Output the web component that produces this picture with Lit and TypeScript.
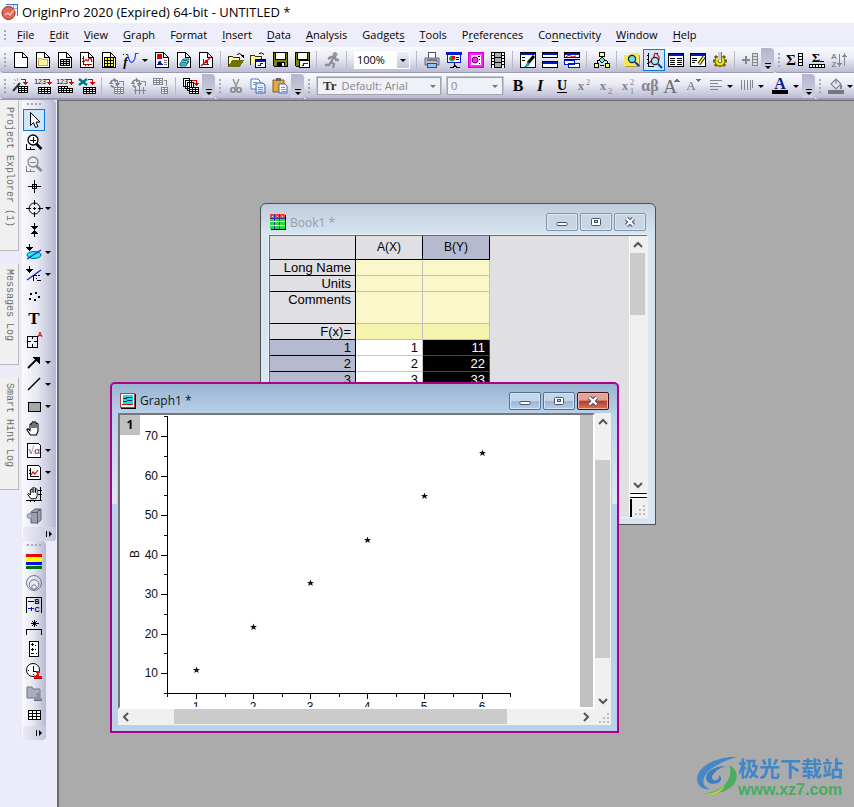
import { LitElement, html, svg, css, nothing } from "lit";
import type { SVGTemplateResult } from "lit";
import { customElement, property } from "lit/decorators.js";
import { classMap } from "lit/directives/class-map.js";
import { styleMap } from "lit/directives/style-map.js";

/* ---------- icon building blocks, drawn on a 16 by 16 grid ---------- */

const G = "#85858f";

const line = (d: string, c = "#000", w = 1, fill = "none") =>
  svg`<path d=${d} stroke=${c} stroke-width=${w} fill=${fill}></path>`;
const fill = (d: string, c = "#000") => svg`<path d=${d} fill=${c}></path>`;
const smooth = (d: string, c = "#000", w = 1, f = "none") =>
  svg`<path shape-rendering="auto" d=${d} stroke=${c} stroke-width=${w} fill=${f}></path>`;
const disc = (x: number, y: number, r: number, f = "none", c = "#000", w = 1) =>
  svg`<circle shape-rendering="auto" cx=${x} cy=${y} r=${r} fill=${f} stroke=${c} stroke-width=${w}></circle>`;
const word = (t: string, x: number, y: number, size: number, c = "#000", family = "Liberation Serif", weight = "bold", style = "normal") =>
  svg`<text x=${x} y=${y} font-size=${size} fill=${c} font-family=${family} font-weight=${weight} font-style=${style} text-anchor="middle">${t}</text>`;

const grid = (x: number, y: number, cols: number, rows: number, cw: number, rh: number, c = "#000", f = "#fff") => {
  const w = cols * cw, h = rows * rh;
  let d = `M${x + 0.5} ${y + 0.5}h${w}v${h}h${-w}z`;
  for (let i = 1; i < cols; i++) d += `M${x + 0.5 + i * cw} ${y + 0.5}v${h}`;
  for (let i = 1; i < rows; i++) d += `M${x + 0.5} ${y + 0.5 + i * rh}h${w}`;
  return line(d, c, 1, f);
};

const page = (f = "#fff") => line("M1.5 .5h8l5 5v10h-13zM9.5 .5v5h5", "#000", 1, f);
const hook = (x: number, y: number, c = "#e00000") =>
  svg`${line(`M${x} ${y + 0.5}h4.5v4`, c)}${fill(`M${x + 2} ${y + 3}h5l-2.500 3z`, c)}`;
const lens = (x: number, y: number, f = "#5fe0f0", c = "#222", h = "#1030c0") =>
  svg`${smooth(`M${x + 3} ${y + 3}l4 4`, h, 2)}${disc(x, y, 3.6, f, c, 1.2)}`;
const handShape = "M4.500 15l-3.500-5q0-2 2-.5l1 1V4.500q1-1.500 2 0V2.500q1-1.500 2 0v0q1-1.500 2 0V4q1-1.500 2 0v7l-1.500 4zM6 4v4M8 3v5M10 3v5";
const hand = smooth(handShape, "#000", 1.1, "#fff");
const stamp = (x: number, y: number, f = "#e81010", c = "#900") =>
  svg`${fill(`M${x + 2} ${y}h4v2h-1v3h3v3h-8v-3h3v-3h-1z`, f)}${line(`M${x} ${y + 7.5}h8`, c)}`;
const disk = (t: SVGTemplateResult | typeof nothing) =>
  svg`${line("M1.500 .5h14v14h-13l-1-1z", "#000", 1, "#7f7f10")}${fill("M4 1h9v6h-9z", "#fff")}${line("M3.500 1v6.500h10v-6.500")}${fill("M5 10h8v5h-8z")}${fill("M10 11h2v3h-2z", "#fff")}${t}`;
const win = (x: number, y: number, w: number, h: number, f = "#fff") =>
  svg`${line(`M${x + 0.5} ${y + 0.5}h${w}v${h}h${-w}z`, "#000", 1, f)}${fill(`M${x + 1} ${y + 1}h${w - 1}v2h${1 - w}z`, "#0018c0")}`;
const cycle = (c: string) => svg`${smooth("M1.500 6q0-4 4-4M8 3q2 3-1 4.500M5 9q-2.500 0-3-2", c, 1.500)}${fill("M5 0l4 2.500-4 2zM6 5l5 0-2.500 4zM0 6h4l-2-3z", c)}`;
const stripes = (c: string, y = 2) => line(`M2 ${y}.500h12M2 ${y + 3}.500h8M2 ${y + 6}.500h12M2 ${y + 9}.500h8`, c);

const icons: Record<string, SVGTemplateResult> = {
  blank: page(),
  folderPage: svg`${page()}${line("M3.500 13.500v-7h3l1 1h5v6z", "#c0b040", 1, "#fff59a")}`,
  bookPage: svg`${page()}${grid(3, 7, 3, 3, 3, 2, "#000", "#ddd")}`,
  graphPage: svg`${page()}${line("M4.500 4v8.500h8M3 6.500h1M3 9.500h1M6.500 13v1M9.500 13v1", "#a00000")}${smooth("M5 10l2-2.500 2 1.500q1-4 3.500-2v3", "#e00000", 1.200)}`,
  matrixPage: svg`${page()}${grid(3, 5, 3, 3, 3, 3, "#000", "#ffff00")}`,
  fx: svg`${line("M0 2.500h1M3 2.500h1M12 2.500h1")}${smooth("M4.500 2q2 10 5 8t3-8.500l3 0", "#2040ff", 1.200)}${word("f", 2.5, 14, 13, "#000", "Liberation Serif", "bold", "italic")}`,
  layoutPage: svg`${page()}${fill("M3 2h5v5h-5z", "#e00000")}${fill("M3 13l3-5 3 5z", "#0010c0")}${line("M10 8.500h3M10 10.500h3M10 12.500h3", "#777")}`,
  notePage: svg`${page()}${smooth("M4 12l3-5h6l-3 5zM4 12v2h6l3-5", "#006a78", 1, "#6ff0f8")}${line("M7 8.500h4M6 10.500h4", "#006a78")}`,
  linkPage: svg`${page()}${smooth("M3 14l10-9", "#e00000", 1.300)}${line("M5.500 7v5h5M9.500 8v5", "#333")}${fill("M7 8h3v3h-3z", "#e00000")}`,
  open: svg`${line("M.5 14.500v-10h4l1 1h6v3", "#303008", 1, "#ffffb0")}${fill("M0 15l4-7h12l-4 7z", "#70700c")}${smooth("M9 2.500q3-2.500 5 1", "#000", 1)}${fill("M12 3h4v3z")}`,
  openTpl: svg`${line("M.5 12.500v-9h4l1 1h6v3", "#303008", 1, "#fff59a")}${smooth("M9 1.500q3-1.500 5 1", "#000", 1)}${win(5, 7, 10, 8)}${line("M8 13.500h2v-2h3", "#0018c0")}`,
  save: disk(nothing),
  saveTpl: disk(svg`${fill("M5 8h11v8h-11z", "#fff")}${line("M5.500 8.500h10v7h-10z")}${line("M7.500 13.500h2v-2h4", "#0018c0")}`),
  run: svg`${disc(11, 2.5, 2, "#999", "#999")}${smooth("M10 5l-3 5 3 2-1 4M7 10l-2 3H1M4 7l3-2h4l1 3h3", "#8d8d93", 2.3)}`,
  print: svg`${fill("M4 1h8v5h-8z", "#fff")}${line("M4.500 6v-5.500h7v5.500", "#556")}${smooth("M1 6h14v7H1z", "#667", 1, "#b8bcc4")}${fill("M3 7h10v2h-10z", "#778")}${line("M3.500 11.500h9v4h-9z", "#445", 1, "#8fc4f4")}${fill("M12 9h2v1h-2z", "#30b030")}`,
  slides: svg`${fill("M0 0h16v3h-16z", "#0018d8")}${line("M1.500 3v7.500h13v-7.500", "#0018d8", 1, "#fff")}${disc(6, 6.5, 2.5, "#18a030", "#18a030")}${fill("M6 4h3v3h-3z", "#e00000")}${line("M10 5.500h3M10 7.500h3M8.500 11v3M4 15.500h3l2-2 2 2h3", "#000")}`,
  pink: svg`${line("M.5 .5h15v15h-15z", "#d000d0", 1, "#ff20ff")}${fill("M3 3h10v10h-10z", "#fff")}${disc(7, 8, 3, "#ff20ff", "#500050")}${line("M10 4.500h2M11 7.500h1M11 11.500h1")}`,
  film: svg`${fill("M1 0h14v16h-14z")}${fill("M5 1h6v4h-6zM5 6h6v4h-6zM5 11h6v4h-6z", "#aaa")}${line("M3 1v15M13 1v15", "#fff", 2)}${line("M1 3h4M11 3h4M1 6h4M11 6h4M1 9h4M11 9h4M1 12h4M11 12h4", "#000", 1)}`,
  editWin: svg`${win(0, 0, 15, 15)}${line("M2 5.500h3M2 8.500h3", "#000")}${smooth("M14 4l-6 7", "#000", 3)}${smooth("M8 10l-3 5 4-2z", "#008890", 1, "#20d0d0")}`,
  twoWin: svg`${win(0, 0, 15, 5)}${win(0, 9, 15, 6)}`,
  threeWin: svg`${win(0, 0, 15, 5)}${smooth("M2 5l3-2 3 2 4-1", "#e00000")}${line("M.5 8.500h10v4h-10zM4.500 11.500h11v4h-11z", "#0018c0", 1, "#fff")}${line("M0 7.500h16")}`,
  tree: svg`${line("M8 4v4M3 12v-3l5-2 5 2v3")}${line("M5.500 .5h5v4h-5zM.5 11.500h4v4h-4zM11.500 11.500h4v4h-4zM6 13.500h4", "#000", 1, "#ffff70")}${smooth("M8 5l3 3-3 3-3-3z", "#000", 1, "#5fe8f0")}`,
  findFolder: svg`${fill("M0 3h5l1-2h9v13h-15z", "#f4e860")}${line("M.5 14.500h14.500v-12", "#b0a020")}${lens(8, 7)}`,
  findGraph: svg`${line("M2.500 1v13.500h5M1 3.500h1M1 7.500h1M1 11.500h1M11.500 2v-1")}${smooth("M3 11l2-2q2 1 3-5t5 1v3", "#e00000", 1.200)}${lens(9, 9, "#a8e8f4")}`,
  tableWin: svg`${win(0, 1, 15, 13)}${line("M2 6.500h5M9 6.500h5M2 8.500h5M9 8.500h5M2 10.500h5M9 10.500h5M2 12.500h5M9 12.500h5")}`,
  noteWin: svg`${win(0, 1, 15, 13)}${line("M2 6.500h5M2 8.500h5M2 10.500h3")}${smooth("M14 5l-5 7", "#000", 3.5)}${smooth("M14 5l-5 7", "#f8f020", 1.8)}`,
  gear: svg`${smooth("M8 3v12M1 9h14M3 4l10 10M13 4l-10 10", "#6b6400", 3)}${disc(8, 9, 5, "#e8e020", "#6b6400")}${disc(8, 9, 1.8, "#fff", "#6b6400")}${fill("M6 0h3v8h-3z", "#ccc")}${line("M9.500 0v8", "#777")}`,
  addCol: svg`${line("M0 8h8M4 4v8", G, 2)}${grid(10, 1, 1, 4, 5, 3, G, "#ddd")}`,
  sumCol: svg`${word("Σ", 4, 13, 15)}${grid(11, 1, 1, 4, 4, 3)}`,
  sumRow: svg`${word("Σ", 7, 10, 13)}${line("M11 9.500h4")}${grid(0, 12, 5, 1, 3, 3)}`,
  sort: svg`${word("A", 3, 7, 8, G, "Liberation Sans")}${word("Z", 3, 15, 8, G, "Liberation Sans")}${line("M8.500 2v11M13.500 3v11", G)}${fill("M6 11h5l-2.500 4zM11 5h5l-2.500-4z", G)}`,

  wizard: svg`${grid(5, 8, 3, 3, 3, 2)}${hook(8, 1)}${smooth("M0 13l7-8", "#333", 2)}${line("M4.500 0v3M1 1l2 2M0 5.500h2", "#e0b000")}`,
  import1: svg`${word("123", 5, 6, 7, "#000", "Liberation Sans", "normal")}${hook(10, 1)}${grid(3, 9, 4, 3, 3, 2)}`,
  importN: svg`${word("123", 5, 6, 7, "#000", "Liberation Sans", "normal")}${hook(10, 1)}${grid(1, 8, 3, 3, 3, 2)}${grid(6, 10, 3, 2, 3, 2)}`,
  excel: svg`${smooth("M0 1l8 6M8 1l-8 6", "#007878", 2.4)}${hook(9, 1)}${grid(4, 9, 4, 3, 3, 2)}`,
  reimp: svg`${cycle(G)}${line("M10 3.500h4v4", G)}${grid(5, 9, 3, 3, 3, 2, G)}`,
  reimp2: svg`${cycle(G)}${line("M10 3.500h4v4M4.500 9v7M8.500 9v7M12.500 9v7M3 12.500h12", G)}`,
  move: svg`${grid(0, 0, 3, 3, 3, 2, G)}${line("M11 2.500h2.500v5", G)}${grid(8, 9, 2, 3, 3, 2, G)}`,
  clone: svg`${line("M.5 .5h6v8h-6zM2.500 2.500h6v8h-6zM4.500 4.500h6v8h-6z", "#000", 1, "#fff")}${grid(6, 9, 3, 3, 3, 2)}${hook(9, 2)}`,
  cut: svg`${smooth("M5 1l4 9M11 1l-4 9", "#999", 1.6)}${disc(5, 12, 2.2, "none", "#888", 1.6)}${disc(11, 12, 2.2, "none", "#888", 1.6)}`,
  copy: svg`${smooth("M1 1h7l2 2v8H1z", "#4a78c0", 1, "#fff")}${smooth("M6 5h7l2 2v8H6z", "#3a68b0", 1, "#dfeaff")}${line("M3 4.500h4M3 6.500h3M8 9.500h5M8 11.500h5M8 13.500h5", "#6b98dc")}`,
  paste: svg`${smooth("M1 2h11v12H1z", "#8a5a10", 1, "#e8a838")}${fill("M4 0h5v3h-5z", "#666")}${smooth("M7 6h6l2 2v7H7z", "#3a68b0", 1, "#fff")}${line("M9 9.500h4M9 11.500h5M9 13.500h5", "#6b98dc")}`,
  bold: word("B", 8, 13, 16),
  italic: word("I", 8, 13, 16, "#000", "Liberation Serif", "bold", "italic"),
  under: svg`${word("U", 8, 12, 14)}${line("M3 14.500h10")}`,
  sup: svg`${word("x", 5, 12, 13, G)}${word("2", 12, 7, 9, G, "Liberation Serif", "normal")}`,
  sub: svg`${word("x", 5, 12, 13, G)}${word("2", 12, 16, 9, G, "Liberation Serif", "normal")}`,
  supsub: svg`${word("x", 5, 12, 13, G)}${word("2", 12, 7, 9, G, "Liberation Serif", "normal")}${word("1", 12, 16, 9, G, "Liberation Serif", "normal")}`,
  greek: word("αβ", 8, 13, 16, G),
  grow: svg`${word("A", 6, 15, 19, "#707078", "Liberation Serif", "normal")}${fill("M10 4h6l-3-4z", "#707078")}`,
  shrink: svg`${word("A", 5, 12, 13, "#707078", "Liberation Serif", "normal")}${fill("M10 1h5l-2.500 3z", "#707078")}`,
  align: stripes(G),
  bars: line("M2.500 2v10M5.500 2v10M8.500 2v10M11.500 2v10M13.500 2v8", G),
  ink: svg`${word("A", 8, 11, 16, "#101880")}${fill("M0 12h16v4h-16z")}`,
  paint: svg`${smooth("M3 6l5-5 5 5-5 5zM8 1v5", G, 1.2, "#e8e8f0")}${fill("M12 6q3 2 2 5h-2z", G)}${fill("M0 12h16v4h-16z", "#777")}`,

  arrow: smooth("M4.500 .5v13l3-3 2 5 2.500-1-2-4.500h4z", "#000", 1, "#fff"),
  zoomIn: svg`${disc(7, 6, 5, "#fff", "#000", 1.3)}${line("M4 6.500h6M7.500 3v6", "#000")}${smooth("M10.500 10l5 5", "#000", 2.5)}${line("M.5 10v5h8M4.500 13v2")}`,
  zoomOut: svg`${disc(7, 6, 5, "#eee", G, 1.3)}${line("M4 6.500h6", G)}${smooth("M10.500 10l5 5", G, 2.5)}${line("M.5 10v5h8M4.500 13v2", G)}`,
  reader: line("M8.500 2v13M2 8.500h13M6.500 6.500h4v4h-4z"),
  cross: svg`${disc(8.5, 8.5, 5.5, "none", "#000")}${line("M8.500 0v5M8.500 12v5M0 8.500h5M12 8.500h5M7 8.500h3M8.500 7v3")}`,
  marker: svg`${line("M8.500 1v4M8.500 11v4")}${fill("M5 4h7l-3.500 4zM5 12h7l-3.500-4z")}`,
  region: svg`${smooth("M1 11a7 3.500 0 1 0 14 0a7 3.500 0 1 0-14 0", "#006080", 1, "#20f0f0")}${smooth("M1 15l14-9", "#1020e0", 1.200)}${line("M3.500 0v4")}${fill("M0 3h7l-3.500 4z")}`,
  mask: svg`${smooth("M1 14l14-10", "#1020e0", 1.200)}${line("M3.500 0v4M7.500 15v-6h3M12 9.500h2M11 14.500h4M10.500 12v1")}${fill("M0 3h7l-3.500 4z")}`,
  dots: fill("M4 5h2v2h-2zM9 4h2v2h-2zM12 8h2v2h-2zM3 10h2v2h-2zM8 11h2v2h-2z"),
  text: word("T", 8, 14, 17, "#000", "Liberation Serif", "bold"),
  annot: svg`${line("M1.500 4.500h10v11h-10zM1 9.500h4M8 9.500h4M6.500 4v3M6.500 12v3")}${word("A", 14, 5, 7, "#e00000", "Liberation Sans")}`,
  arrowLine: svg`${smooth("M2 14l9-9", "#000", 1.8)}${fill("M6 3h8v8z")}`,
  lineTool: smooth("M2 14l12-12", "#000", 1.4),
  rect: line("M2.500 4.500h12v9h-12z", "#000", 1, "#a8a8a8"),
  hand,
  rootPage: svg`${line("M1.500 1.500h11l2 2v12h-13z", "#000", 1, "#fff")}${word("√α", 8, 12, 11, "#700090", "Liberation Serif", "normal")}`,
  plotPage: svg`${line("M1.500 1.500h11l2 2v12h-13z", "#000", 1, "#fff")}${line("M4.500 4v8.500h8M3 6.500h1M3 9.500h1")}${smooth("M5 11l2-3 2 2 3-4", "#e00000", 1.2)}`,
  handAxis: svg`${line("M14.500 1v14M12 14.500h4M0 14.500h12M12 4.500h4M12 8.500h4M4.500 14v2M8.500 14v2")}<g transform="translate(1 0) scale(.85)">${hand}</g>`,
  cube: svg`${smooth("M5 4l4-3h6v11l-4 3H5z", "#5a6070", 1, "#9ba2ae")}${line("M5.500 4.500h6v11M11 4l4-3", "#5a6070")}${disc(3.5, 8, 2.5, "#b8bec8", "#8a90a0")}`,
  colors: svg`${fill("M0 1h16v3h-16z", "#f00000")}${fill("M0 5h16v3h-16z", "#ffff00")}${fill("M0 9h16v3h-16z", "#0010f0")}${fill("M0 13h16v3h-16z", "#007010")}`,
  rings: svg`${disc(8, 8, 7.5, "none", "#70788c")}${disc(8, 9.5, 4.8, "#e6e8f2", "#70788c")}${disc(8, 12, 2.2, "#fff", "#70788c")}`,
  legend: svg`${line("M.5 16v-15.500h15v15.500M2 4.500h6")}${line("M2 11.500h6M5 9.500v4", "#0010f0")}${word("B", 11, 7, 7, "#000", "Liberation Sans")}${word("C", 11, 15, 7, "#000", "Liberation Sans")}`,
  scale: svg`${line("M8.500 1v7M5 4.500h8M6 2l5 5M11 2l-5 5")}${line("M.5 16v-5.500h15v5.500")}`,
  scaleBar: svg`${line("M3.500 .5h9v15h-9z", "#000", 1, "#fff")}${line("M5 3.500h3M5 8.500h3M5 12.500h3M6.500 2v3M6.500 7v3M9.500 4v1M9.500 8v1M10.500 12v1")}`,
  clock: svg`${disc(7, 7, 6.5, "#fff", "#000")}${line("M7.500 3v5h3M2 7.500h1M7.500 12v-1")}${stamp(8, 8)}`,
  folderStamp: svg`${smooth("M1 13v-11h5l1 2h7v9z", "#70788c", 1, "#a8aebc")}${stamp(8, 8, "#8a90a0", "#606878")}`,
  table: grid(2, 3, 3, 3, 4, 3),

  app: svg`${line("M4 .5h11.500v11", "#3a78d0", 1, "#e4f0ff")}${line("M8 4.500h7M11.500 1v10", "#8ab4ec")}${smooth("M0 9a6.500 6.500 0 1 0 13 0a6.500 6.500 0 1 0-13 0", "#a02818", 1, "#e06a58")}${smooth("M3 11l3-2 2 2 4-5", "#f4c4b8", 1.4)}`,
  book: svg`${fill("M1 1h15v15h-15z")}${fill("M0 0h15v15h-15z", "#30d840")}${fill("M0 0h15v4h-15z", "#f04040")}${line("M0 4.500h15M4.500 0v15M9.500 0v15", "#3038b0")}${line("M0 7.500h15M0 11.500h15", "#d8ffd8")}${line("M2 2.500h1M7 2.500h1M12 2.500h1", "#fff")}`,
  graph: svg`${fill("M1 1h15v15h-15z")}${line("M.5 .5h14v14h-14z", "#a84040", 1, "#fff")}${fill("M3 2h10v9h-10z", "#18e0e0")}${line("M3 5.500h3l1-1h5M3 8.500h3l2-1h4", "#102060")}${line("M2 11.500h11", "#c01010")}`,
};

const glyph = (name: string) => html`<svg class="glyph" viewBox="0 0 16 16" aria-hidden="true">${icons[name]}</svg>`;
const iconStyles = css`
  .glyph { width: 16px; height: 16px; display: block; flex: none; overflow: visible; shape-rendering: crispEdges; }
`;

/* ---------- tool bars ---------- */

type Item =
  | { kind: "tool"; icon: string; label: string; drop?: boolean; on?: boolean; wide?: boolean }
  | { kind: "sep" }
  | { kind: "grip" }
  | { kind: "more" }
  | { kind: "combo"; label: string; value: string; size: string; off?: boolean; tt?: boolean };

const t = (icon: string, label: string, extra: object = {}): Item => ({ kind: "tool", icon, label, ...extra });
const sep: Item = { kind: "sep" };
const grip: Item = { kind: "grip" };
const more: Item = { kind: "more" };

@customElement("tool-bar")
class ToolBar extends LitElement {
  @property({ attribute: false }) items: Item[] = [];
  @property({ type: Boolean, reflect: true }) vertical = false;

  static styles = [iconStyles, css`
    :host { display: flex; align-items: center; height: 26px; overflow: hidden; background: #ebebfa; }
    :host([vertical]) { flex-direction: column; align-items: flex-start; height: auto; border-radius: 4px;
      background: linear-gradient(90deg, #fafaff, #e6e7f2 45%, #b7b8d1); box-sizing: border-box; padding-left: 1px; }
    .bar { display: flex; align-items: center; height: 26px; padding-top: 1px; flex: none;
      background: linear-gradient(#fafbff, #e9eaf4 45%, #bbbcd2); border-radius: 4px 0 0 4px; border-bottom: 1px solid #9a9ab4; box-sizing: border-box; }
    .bar:last-child { flex: 1 0 auto; }
    button { padding: 0; border: 0; background: none; font: inherit; display: flex; align-items: center; justify-content: center; flex: none; }
    .tool { width: 22px; height: 22px; box-sizing: border-box; }
    .tool.wide { width: 26px; }
    .tool.on { border: 1px solid #0a78d4; background: #cfe6fa; }
    .pair { display: flex; align-items: center; flex: none; }
    .arrow { width: 9px; height: 22px; padding-right: 3px; }
    .arrow::before, .pick::after { content: ""; border: 3px solid transparent; border-top-color: #000; border-bottom: 0; }
    .sep { width: 1px; height: 18px; margin: 0 4px 0 3px; background: #b8b8c6; flex: none; }
    .grip { width: 2px; height: 14px; margin: 0 4px; flex: none; background: repeating-linear-gradient(#a9a9b6 0 2px, transparent 2px 4px); }
    .more { width: 13px; height: 24px; flex-direction: column; justify-content: flex-end; gap: 2px; padding-bottom: 3px;
      background: linear-gradient(#b4b5cc, #cfd0df); border-radius: 0 4px 4px 0; box-sizing: border-box; }
    .more::before { content: ""; width: 6px; height: 1px; background: #000; }
    .more::after { content: ""; border: 3px solid transparent; border-top-color: #000; border-bottom: 0; }
    :host([vertical]) .grip { width: 16px; height: 2px; margin: 3px 4px 4px;
      background: repeating-linear-gradient(90deg, #a9a9b6 0 2px, transparent 2px 4px); }
    :host([vertical]) .more { width: 100%; height: 14px; flex-direction: row; align-items: center; gap: 2px; padding: 0 4px 0 0;
      background: linear-gradient(90deg, #ebebf6, #c4c5d8); border-radius: 0; }
    :host([vertical]) .more::before { width: 1px; height: 6px; }
    :host([vertical]) .more::after { border: 3px solid transparent; border-left-color: #000; border-right: 0; }
    .pick { position: relative; display: flex; align-items: center; height: 18px; box-sizing: border-box; margin: 0 3px; background: #fff;
      color: #000; font: 11px/16px "Open Sans", sans-serif; flex: none; }
    .pick.off { border: 1px solid #a2a2ae; outline: 1px solid #c3c3ce; background: #f0f1f7; color: #85858f; }
    .pick::after { position: absolute; right: 4px; top: 8px; }
    .pick:not(.off)::before { content: ""; position: absolute; right: 1px; top: 1px; bottom: 1px; width: 12px; background: linear-gradient(#eef0f8, #c4c5d8); }
    .pick.off::after { border-top-color: #777; top: 7px; }
    .tt { margin-left: 5px; font: bold 13px/16px "Liberation Serif", serif; color: #333; }
    select { appearance: none; border: 0; background: none; font: inherit; color: inherit; opacity: 1; flex: 1; min-width: 0; height: 100%; padding: 0 14px 0 3px; }
    .tt + select { padding-left: 5px; }
    .small { width: 56px; } .large { width: 124px; } .medium { width: 56px; margin: 0 4px 0 3px; }
  `];

  private draw(i: Item) {
    switch (i.kind) {
      case "sep": return html`<span class="sep"></span>`;
      case "grip": return html`<span class="grip"></span>`;
      case "more": return html`<button class="more" aria-label="More buttons"></button>`;
      case "combo": return html`<label class="pick ${i.size} ${i.off ? "off" : ""}">
        ${i.tt ? html`<span class="tt">Tr</span>` : nothing}
        <select aria-label=${i.label} ?disabled=${!!i.off}><option>${i.value}</option></select></label>`;
      case "tool": {
        const b = html`<button class=${classMap({ tool: true, on: !!i.on, wide: !!i.wide })} aria-label=${i.label}>${glyph(i.icon)}</button>`;
        return i.drop ? html`<span class="pair">${b}<button class="arrow" aria-label="${i.label} options"></button></span>` : b;
      }
    }
  }

  render() {
    if (this.vertical) return this.items.map((i) => this.draw(i));
    const groups: Item[][] = [];
    for (const i of this.items) {
      if (i.kind === "grip") groups.push([]);
      groups[groups.length - 1].push(i);
    }
    return groups.map((g) => html`<div class="bar">${g.map((i) => this.draw(i))}</div>`);
  }
}

const standardBar: Item[] = [
  grip, t("blank", "New project"), t("folderPage", "New folder"), t("bookPage", "New workbook"), t("graphPage", "New graph"),
  t("matrixPage", "New matrix"), t("fx", "New function", { drop: true }), t("layoutPage", "New layout"), t("notePage", "New notes"), t("linkPage", "Digitize"),
  sep, t("open", "Open"), t("openTpl", "Open template"), t("save", "Save"), t("saveTpl", "Save template"),
  sep, t("run", "Run"), sep, { kind: "combo", label: "Zoom", value: "100%", size: "small" },
  sep, t("print", "Print"), t("slides", "Slide show"), t("pink", "Send to slides"), t("film", "Video"),
  sep, t("editWin", "Edit"), t("twoWin", "Tile"), t("threeWin", "Cascade"),
  sep, t("tree", "Tree"), sep, t("findFolder", "Project explorer"), t("findGraph", "Object manager", { on: true }),
  t("tableWin", "Results log"), t("noteWin", "Command window"), t("gear", "Code builder"),
  sep, t("addCol", "Add column"), more,
  grip, t("sumCol", "Column statistics"), t("sumRow", "Row statistics"), t("sort", "Sort"),
];

const formatBar: Item[] = [
  grip, t("wizard", "Import wizard"), t("import1", "Import ASCII"), t("importN", "Import multiple"), t("excel", "Import Excel"),
  sep, t("reimp", "Reimport"), t("reimp2", "Reimport all"), t("move", "Transfer"), sep, t("clone", "Clone import"), more,
  grip, t("cut", "Cut"), t("copy", "Copy"), t("paste", "Paste"), more,
  grip, { kind: "combo", label: "Font", value: "Default: Arial", size: "large", off: true, tt: true },
  { kind: "combo", label: "Font size", value: "0", size: "medium", off: true },
  t("bold", "Bold"), t("italic", "Italic"), t("under", "Underline"), t("sup", "Superscript"), t("sub", "Subscript"),
  t("supsub", "Super and subscript"), t("greek", "Greek"), t("grow", "Increase font"), t("shrink", "Decrease font"),
  t("align", "Align", { drop: true }), t("bars", "Spacing", { drop: true }), t("ink", "Font color", { drop: true, wide: true }), more,
  grip, t("paint", "Fill color", { drop: true }),
];

const toolsBar: Item[] = [
  grip, t("arrow", "Pointer", { on: true }), t("zoomIn", "Zoom in"), t("zoomOut", "Zoom out"), t("reader", "Screen reader"),
  t("cross", "Data reader", { drop: true }), t("marker", "Data selector"), t("region", "Region selection", { drop: true }),
  t("mask", "Mask points", { drop: true }), t("dots", "Draw data"), t("text", "Text"), t("annot", "Annotation"),
  t("arrowLine", "Arrow", { drop: true }), t("lineTool", "Line", { drop: true }), t("rect", "Rectangle", { drop: true }),
  t("hand", "Pan"), t("rootPage", "Insert equation", { drop: true }), t("plotPage", "Insert graph", { drop: true }),
  t("handAxis", "Rescale"), t("cube", "Rotate"), more,
];

const graphBar: Item[] = [
  grip, t("colors", "Color scale"), t("rings", "Bubble scale"), t("legend", "Legend"), t("scale", "XY scale"),
  t("scaleBar", "Scale bar"), t("clock", "Date stamp"), t("folderStamp", "Project path"), t("table", "Table"), more,
];

/* ---------- child windows ---------- */

@customElement("child-window")
class ChildWindow extends LitElement {
  @property() caption = "";
  @property() icon = "";
  @property({ type: Boolean, reflect: true }) active = false;

  static styles = [iconStyles, css`
    :host { display: flex; flex-direction: column; box-sizing: border-box; border: 1px solid #4f4f52; border-radius: 6px 6px 0 0; padding: 0 7px 7px 8px;
      background: linear-gradient(#bfccda, #d7e4f2 30px); font: 12px/16px "Open Sans", sans-serif; }
    :host([active]) { border: 2px solid #b0008a; border-radius: 5px 5px 0 0; padding: 0 6px 6px;
      background: linear-gradient(#b9d1ea, #dce9f6) left 30px / 5px 90px no-repeat,
        linear-gradient(#b9d1ea, #dce9f6) right 30px / 5px 90px no-repeat, linear-gradient(#99b4d1, #b9d1ea 30px); }
    header { display: flex; align-items: center; height: 31px; gap: 4px; padding: 5px 2px 0 1px; box-sizing: border-box; color: #959ba2; flex: none; }
    :host([active]) header { color: #101418; height: 29px; padding: 4px 2px 0 2px; }
    h2 { margin: 0; flex: 1; font: inherit; padding-top: 1px; }
    .buttons { display: flex; gap: 2px; }
    button { width: 32px; height: 18px; box-sizing: border-box; padding: 0; border: 1px solid #8493ad; border-radius: 2px; display: grid; place-items: center;
      background: #c7d5e4; box-shadow: inset 0 0 0 1px #dde8f3; }
    :host([active]) button { border-color: #54708f; background: linear-gradient(#c3d6ea 50%, #9ab5d3 50%, #b5cee8); box-shadow: inset 0 0 0 1px #d4e3f3; }
    :host([active]) .close { border-color: #45101a; background: linear-gradient(#e2a397 45%, #b83a24 50%, #d1765b); box-shadow: inset 0 0 0 1px #efb3a5; }
    svg { display: block; }
    .body { flex: 1; min-height: 0; display: flex; flex-direction: column; }
  `];

  render() {
    return html`
      <header>
        ${glyph(this.icon)}
        <h2>${this.caption}</h2>
        <div class="buttons">
          <button aria-label="Minimize"><svg width="12" height="10"><rect x="1" y="5.500" width="10" height="3" rx="1" fill="#fff" stroke="#4a5468"></rect></svg></button>
          <button aria-label="Maximize"><svg width="12" height="10"><rect x="1.500" y="1.500" width="9" height="7" rx="1" fill="#fff" stroke="#4a5468"></rect><rect x="4.500" y="3.500" width="3" height="2" fill="#b9cbe0" stroke="#4a5468"></rect></svg></button>
          <button class="close" aria-label="Close"><svg width="12" height="10"><path d="M2.500 1.500l7 7M9.500 1.500l-7 7" stroke="#4a5468" stroke-width="4.500"></path><path d="M2.500 1.500l7 7M9.500 1.500l-7 7" stroke="#fff" stroke-width="2.400"></path></svg></button>
        </div>
      </header>
      <div class="body"><slot></slot></div>`;
  }
}

/* ---------- scatter plot ---------- */

const points = [1, 2, 3, 4, 5, 6].map((x) => ({ x, y: x * 11 }));
const px = (v: number) => Math.round(76 + (v - 1) * 57.1) + 0.5;
const py = (v: number) => Math.round(258 - (v - 10) * 39.5 / 10) + 0.5;

@customElement("scatter-plot")
class ScatterPlot extends LitElement {
  static styles = css`
    :host { display: block; overflow: hidden; background: #fff; position: relative; }
    svg { display: block; width: 460px; height: 300px; }
    .axis { stroke: #000; fill: none; shape-rendering: crispEdges; }
    text { font: 12px "Liberation Sans", sans-serif; fill: #111; }
    .num { text-anchor: end; } .mid { text-anchor: middle; }
    .layer { position: absolute; left: 0; top: 0; width: 20px; height: 20px; padding: 0; border: 0; background: #c0c0c0; font: bold 12px/20px "Open Sans", sans-serif; color: #000; }
  `;
  render() {
    const majorsY = [10, 20, 30, 40, 50, 60, 70];
    const minorsY = [5, 15, 25, 35, 45, 55, 65, 75];
    const minorsX = [0.5, 1.5, 2.5, 3.5, 4.5, 5.5, 6.5];
    const d = [
      `M47.500 ${py(75)}V${py(5)}M${px(0.5)} ${py(5)}H${px(6.5)}`,
      ...majorsY.map((v) => `M41 ${py(v)}h7`), ...minorsY.map((v) => `M44 ${py(v)}h4`),
      ...points.map((p) => `M${px(p.x)} ${py(5)}v5`), ...minorsX.map((v) => `M${px(v)} ${py(5)}v3`),
    ].join("");
    return html`
      <svg viewBox="0 0 460 300" role="img" aria-label="Scatter plot of B">
        <path class="axis" d=${d}></path>
        ${majorsY.map((v) => svg`<text class="num" x="38" y=${py(v) + 3.5}>${v}</text>`)}
        ${points.map((p) => svg`<text class="mid" x=${px(p.x) - 0.5} y="296">${p.x}</text>
          <path transform="translate(${px(p.x)} ${py(p.y) + 0.5})" d="M0-3.500l.9 2.400h2.600l-2 1.600.8 2.500-2.300-1.500-2.300 1.500.8-2.500-2-1.600h2.600z" fill="#111"></path>`)}
        <text class="mid" transform="translate(19 139) rotate(-90)">B</text>
      </svg>
      <button class="layer">1</button>`;
  }
}

/* ---------- scroll bars ---------- */

@customElement("scroll-track")
class ScrollTrack extends LitElement {
  @property({ type: Boolean, reflect: true }) across = false;
  @property({ type: Number }) start = 0;
  @property({ type: Number }) size = 50;

  static styles = css`
    :host { display: flex; flex-direction: column; width: 16px; background: #f0f0f0; flex: none; }
    :host([across]) { flex-direction: row; width: auto; height: 16px; }
    button { width: 16px; height: 17px; padding: 0; border: 0; background: none; display: grid; place-items: center; flex: none; }
    :host([across]) button { height: 16px; }
    .track { flex: 1; position: relative; }
    .thumb { position: absolute; left: 0; right: 1px; background: #cbcbcb; }
    :host([across]) .thumb { left: auto; right: auto; top: 0; bottom: 1px; }
    path { fill: none; stroke: #555; stroke-width: 2; }
  `;
  render() {
    const d = this.across ? ["M7 1L3 5l4 4", "M3 1l4 4-4 4"] : ["M1 7l4-4 4 4", "M1 3l4 4 4-4"];
    const box = this.across
      ? { left: `${this.start}%`, width: `${this.size}%` }
      : { top: `${this.start}%`, height: `${this.size}%` };
    return html`
      <button aria-label="Scroll back"><svg width="10" height="10"><path d=${d[0]}></path></svg></button>
      <div class="track"><div class="thumb" style=${styleMap(box)}></div></div>
      <button aria-label="Scroll forward"><svg width="10" height="10"><path d=${d[1]}></path></svg></button>`;
  }
}

/* ---------- application ---------- */

const menus = ["_File", "_Edit", "_View", "_Graph", "F_ormat", "_Insert", "_Data", "_Analysis", "Gadget_s", "_Tools", "P_references", "Co_nnectivity", "_Window", "_Help"];
const headRows = [["Long Name", "name"], ["Units", "units"], ["Comments", "comments"], ["F(x)=", "formula"]];

const sizeGrip = html`<svg class="corner" width="10" height="10" aria-hidden="true"><path d="M8 0h2v2h-2zM8 4h2v2h-2zM8 8h2v2h-2zM4 4h2v2h-2zM4 8h2v2h-2zM0 8h2v2h-2z" fill="#bdbdbd"></path></svg>`;

@customElement("app-root")
class AppRoot extends LitElement {
  static styles = [iconStyles, css`
    :host { display: flex; flex-direction: column; min-height: 100vh; overflow: hidden; background: #ebebfa; font: 12px/16px "Open Sans", sans-serif; color: #000; }
    .title { display: flex; align-items: center; gap: 4px; height: 23px; padding-left: 2px; background: #fff; }
    h1 { margin: 0; font: 13px/20px "Open Sans", sans-serif; white-space: nowrap; }
    nav { display: flex; align-items: center; gap: 1px; height: 24px; background: #eeeefb; overflow: hidden; }
    .grip { width: 2px; height: 10px; margin: 0 3px 0 4px; background: repeating-linear-gradient(#a9a9b6 0 2px, transparent 2px 4px); flex: none; }
    nav button { border: 0; background: none; padding: 0 7px; font: 11px/20px "Open Sans", sans-serif; color: #000; white-space: nowrap; flex: none; }
    u { text-underline-offset: 2px; text-decoration-thickness: 1px; }
    .main { flex: 1; display: flex; border-top: 1px solid #9b9bb2; }
    .tabs { width: 19px; display: flex; flex-direction: column; gap: 12px; flex: none; }
    .tabs button { width: 19px; height: 102px; padding: 5px 0 0; border: 1px solid #b9b9bd; border-left: 0; border-top-color: #ececf2; background: #f0f0f0; box-sizing: border-box;
      display: flex; align-items: center; writing-mode: vertical-rl; font: 10px/14px "Liberation Mono", monospace; color: #6e6e6e; text-align: left; }
    .tabs .project { height: 151px; padding-top: 6px; }
    .tabs .hint { height: 113px; }
    .docks { width: 35px; margin-left: 3px; display: flex; flex-direction: column; align-items: flex-start; flex: none; }
    .tools { width: 34px; } .graphs { width: 24px; }
    .workspace { flex: 1; position: relative; overflow: hidden; background: #ababab; border: solid #6d6d70; border-width: 1px 0 0 2px; min-height: 640px; }
    .bookwin { position: absolute; left: 201px; top: 102px; width: 396px; height: 322px; }
    .graphwin { position: absolute; left: 51px; top: 281px; width: 509px; height: 351px; }
    .book { flex: 1; display: flex; background: #e0dfe4; border: solid #6b6b6b; border-width: 1px 0 0 1px; outline: 1px solid #eef3f8; outline-offset: 0; margin-right: 1px; }
    .cells { flex: 1; min-width: 0; overflow: hidden; }
    .rail { width: 17px; display: flex; flex-direction: column; background: #f0f0f0; border-left: 1px solid #fff; }
    .rail scroll-track { flex: 1; }
    .split { height: 3px; border: solid #000; border-width: 1px 0; background: #fff; outline: 1px solid #fff; margin-bottom: 1px; }
    .box { height: 18px; display: flex; align-items: flex-end; justify-content: flex-end; padding: 0 2px 2px 0; border-left: 2px solid #000; box-sizing: border-box; }
    .corner { display: block; flex: none; }
    table { border-collapse: separate; border-spacing: 0; table-layout: fixed; width: 220px; font: 13px/15px "Liberation Sans", sans-serif; }
    .key { width: 86px; } .col { width: 67px; }
    th, td { padding: 0 4px; font-weight: normal; text-align: right; vertical-align: top; border: solid #000; border-width: 0 1px 1px 0; height: 15px; overflow: hidden; box-sizing: content-box; white-space: nowrap; }
    thead th { height: 23px; line-height: 23px; text-align: center; font-size: 12px; }
    .second { background: #b5bad1; }
    .meta td { background: #faf8c8; border-color: #c0c0c0; }
    .comments th, .comments td { height: 31px; }
    .formula td { background: #f6f4ae; }
    .data th { background: #b5bad1; }
    .data td { background: #fff; border-color: #c8c8c8; }
    .data .picked { background: #000; color: #fff; border-color: #444; }
    .graph { flex: 1; display: flex; flex-direction: column; background: #f0f0f0; min-height: 0; }
    .upper { display: flex; flex: 1; min-height: 0; }
    .canvas { flex: 1; display: flex; background: #fff; border-top: 2px solid #77777a; border-left: 2px solid #77777a; border-right: 2px solid #fff; border-bottom: 2px solid #fff; box-sizing: border-box; overflow: hidden; }
    .canvas scatter-plot { flex: 1; }
    .edge { width: 13px; background: #c0c0c0; }
    .lower { display: flex; }
    .lower scroll-track { flex: 1; }
    .lower .box { width: 17px; height: 16px; border: 0; }
    .mark { position: absolute; right: 11px; bottom: 8px; display: flex; align-items: center; font: bold 16px/18px "Liberation Sans", sans-serif; color: #47ab62; }
    .mark strong { display: block; font: bold 21px/28px "Noto Sans CJK SC", sans-serif; color: #3f87c6; }
  `];

  private menu(m: string) {
    const i = m.indexOf("_");
    return html`<button>${m.slice(0, i)}<u>${m[i + 1]}</u>${m.slice(i + 2)}</button>`;
  }

  render() {
    return html`
      <header class="title">${glyph("app")}<h1>OriginPro 2020 (Expired) 64-bit - UNTITLED *</h1></header>
      <nav><span class="grip"></span>${menus.map((m) => this.menu(m))}</nav>
      <tool-bar .items=${standardBar}></tool-bar>
      <tool-bar .items=${formatBar}></tool-bar>
      <div class="main">
        <div class="tabs">
          <button class="project">Project Explorer (1)</button>
          <button>Messages Log</button>
          <button class="hint">Smart Hint Log</button>
        </div>
        <div class="docks">
          <tool-bar vertical class="tools" .items=${toolsBar}></tool-bar>
          <tool-bar vertical class="graphs" .items=${graphBar}></tool-bar>
        </div>
        <main class="workspace">
          <child-window class="bookwin" caption="Book1 *" icon="book">
            <div class="book">
              <div class="cells">
                <table>
                  <colgroup><col class="key"><col class="col"><col class="col"></colgroup>
                  <thead><tr><th></th><th>A(X)</th><th class="second">B(Y)</th></tr></thead>
                  <tbody class="meta">
                    ${headRows.map(([label, kind]) => html`<tr class=${kind}><th>${label}</th><td></td><td></td></tr>`)}
                  </tbody>
                  <tbody class="data">
                    ${points.map((p) => html`<tr><th>${p.x}</th><td>${p.x}</td><td class="picked">${p.y}</td></tr>`)}
                  </tbody>
                </table>
              </div>
              <div class="rail">
                <scroll-track .start=${0} .size=${28}></scroll-track>
                <div class="split"></div>
                <div class="box">${sizeGrip}</div>
              </div>
            </div>
          </child-window>
          <child-window active class="graphwin" caption="Graph1 *" icon="graph">
            <div class="graph">
              <div class="upper">
                <div class="canvas"><scatter-plot></scatter-plot><div class="edge"></div></div>
                <scroll-track .start=${11.5} .size=${75.5}></scroll-track>
              </div>
              <div class="lower">
                <scroll-track across .start=${9} .size=${75}></scroll-track>
                <div class="box">${sizeGrip}</div>
              </div>
            </div>
          </child-window>
          <div class="mark">
            <svg width="42" height="40" viewBox="0 0 42 40" aria-hidden="true">
              <path d="M41 1C22 0 1 10 1 23c0 7 6 11 13 10-6-2-8-6-6-11C11 13 26 5 41 1z" fill="#4488c8"></path>
              <path d="M30 10c-12 0-20 6-20 12 0 5 6 7 12 5 4-2 4-6 1-8 1 4-2 6-5 5-5-2 0-10 12-14z" fill="#3c80c0"></path>
              <path d="M33 9c8 4 10 12 5 19C33 35 20 39 8 38c12-2 19-7 23-12 4-6 4-11 2-17z" fill="#48ad60"></path>
              <path d="M8 38c9 0 17-4 22-10-4 9-12 12-22 10z" fill="#c5cf3c"></path>
            </svg>
            <div><strong>极光下载站</strong>www.xz7.com</div>
          </div>
        </main>
      </div>`;
  }
}
